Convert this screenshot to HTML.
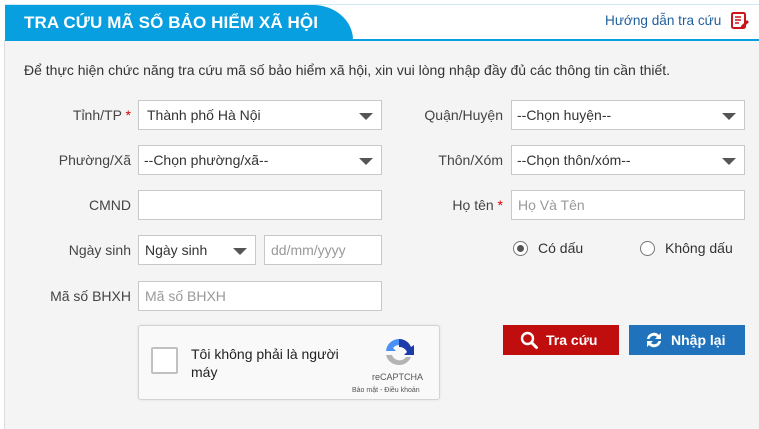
<!DOCTYPE html>
<html><head><meta charset="utf-8"><style>
*{box-sizing:border-box;margin:0;padding:0}
body{width:759px;height:429px;background:#fff;font-family:"Liberation Sans",Tahoma,sans-serif;font-size:14px;color:#333;position:relative;overflow:hidden}
.a{position:absolute}
.body{left:4px;top:40px;width:755px;height:389px;background:#f4f4f4;border-left:1px solid #ddd}
.tab{left:5px;top:5px;width:348px;height:35px;background:#089fe0;border-top-right-radius:40px 35px}
.tab span{position:absolute;left:19px;top:8px;color:#fff;font-weight:bold;font-size:17px;letter-spacing:.1px}
.lbl{text-align:right;font-size:14px;color:#444;height:30px;line-height:30px}
.lbl b{color:#d00;font-weight:normal}
.f{background:#fff;border:1px solid #c8c8c8;height:30px;line-height:28px;padding-left:8px;font-size:14px;color:#333}
.f.ph{color:#999}
.sel:after{content:"";position:absolute;right:8px;top:12px;border-left:7px solid transparent;border-right:7px solid transparent;border-top:7px solid #555}
.rad{width:15px;height:15px;border:1px solid #777;border-radius:50%;background:#fff}
.btn{height:30px;color:#fff;font-weight:bold;font-size:14px;line-height:30px}
</style></head><body>
<div class="a" style="left:5px;top:4px;width:754px;height:1px;background:#cfe9f7"></div>
<div class="a body"></div>
<div class="a tab"><span>TRA CỨU MÃ SỐ BẢO HIỂM XÃ HỘI</span></div>
<div class="a" style="left:5px;top:39px;width:754px;height:2px;background:#089fe0"></div>
<div class="a" style="left:605px;top:13px;color:#1f5f9e;font-size:13.6px">Hướng dẫn tra cứu</div>
<svg class="a" style="left:731px;top:12px" width="18" height="18" viewBox="0 0 18 18"><rect x="1" y="1" width="13" height="15" rx="1.5" fill="#fff" stroke="#c8161d" stroke-width="2"/><path d="M4 5h6M4 8h6M4 11h4" stroke="#c8161d" stroke-width="1.6"/><path d="M10 14l6-6 2 2-6 6h-2z" fill="#c8161d"/></svg>
<div class="a" style="left:24px;top:62px;font-size:14px;color:#333">Để thực hiện chức năng tra cứu mã số bảo hiểm xã hội, xin vui lòng nhập đầy đủ các thông tin cần thiết.</div>

<div class="a lbl" style="left:20px;top:100px;width:111px">Tỉnh/TP <b>*</b></div>
<div class="a f sel" style="left:138px;top:100px;width:244px">Thành phố Hà Nội</div>
<div class="a lbl" style="left:390px;top:100px;width:113px">Quận/Huyện</div>
<div class="a f sel" style="left:511px;top:100px;width:234px;padding-left:5px">--Chọn huyện--</div>

<div class="a lbl" style="left:20px;top:145px;width:111px">Phường/Xã</div>
<div class="a f sel" style="left:138px;top:145px;width:244px;padding-left:5px">--Chọn phường/xã--</div>
<div class="a lbl" style="left:390px;top:145px;width:113px">Thôn/Xóm</div>
<div class="a f sel" style="left:511px;top:145px;width:234px;padding-left:5px">--Chọn thôn/xóm--</div>

<div class="a lbl" style="left:20px;top:190px;width:111px">CMND</div>
<div class="a f" style="left:138px;top:190px;width:244px"></div>
<div class="a lbl" style="left:390px;top:190px;width:113px">Họ tên <b>*</b></div>
<div class="a f ph" style="left:511px;top:190px;width:234px;padding-left:6px">Họ Và Tên</div>

<div class="a lbl" style="left:20px;top:235px;width:111px">Ngày sinh</div>
<div class="a f sel" style="left:138px;top:235px;width:118px;padding-left:6px">Ngày sinh</div>
<div class="a f ph" style="left:264px;top:235px;width:118px;padding-left:6px">dd/mm/yyyy</div>
<div class="a rad" style="left:513px;top:241px"></div>
<div class="a" style="left:517px;top:245px;width:7px;height:7px;border-radius:50%;background:#555"></div>
<div class="a" style="left:538px;top:240px;color:#333">Có dấu</div>
<div class="a rad" style="left:640px;top:241px"></div>
<div class="a" style="left:665px;top:240px;color:#333">Không dấu</div>

<div class="a lbl" style="left:20px;top:281px;width:111px">Mã số BHXH</div>
<div class="a f ph" style="left:138px;top:281px;width:244px;padding-left:6px">Mã số BHXH</div>

<div class="a" style="left:138px;top:325px;width:302px;height:75px;background:#f9f9f9;border:1px solid #d3d3d3;border-radius:3px;box-shadow:0 0 3px rgba(0,0,0,.08)"></div>
<div class="a" style="left:151px;top:347px;width:27px;height:27px;background:#fff;border:2px solid #c1c1c1;border-radius:2px"></div>
<div class="a" style="left:191px;top:345px;font-size:14px;line-height:18px;color:#222;width:160px">Tôi không phải là người máy</div>
<svg class="a" style="left:382px;top:335px" width="34" height="34" viewBox="0 0 34 34"><path d="M17 4a13 13 0 0 1 12 8l3-2v10h-10l3-3a8 8 0 0 0-8-5z" fill="#1c3aa9"/><path d="M4 17A13 13 0 0 1 17 4v6a8 8 0 0 0-6 3l3 3H4z" fill="#4a90f5"/><path d="M17 30A13 13 0 0 1 4 20h6a8 8 0 0 0 14 2l5 0a13 13 0 0 1-12 8z" fill="#b3b3b3"/></svg>
<div class="a" style="left:372px;top:372px;font-size:9px;color:#555">reCAPTCHA</div>
<div class="a" style="left:352px;top:387px;font-size:7px;color:#555">Bảo mật - Điều khoản</div>

<div class="a btn" style="left:503px;top:325px;width:116px;background:#c00d0d"></div>
<svg class="a" style="left:520px;top:331px" width="19" height="19" viewBox="0 0 19 19"><circle cx="7.5" cy="7.5" r="5.5" fill="none" stroke="#fff" stroke-width="2.4"/><path d="M11.5 11.5l5 5" stroke="#fff" stroke-width="3" stroke-linecap="round"/></svg>
<div class="a btn" style="left:546px;top:325px">Tra cứu</div>
<div class="a btn" style="left:629px;top:325px;width:116px;background:#1f72bb"></div>
<svg class="a" style="left:644px;top:330px" width="20" height="20" viewBox="0 0 20 20"><path d="M3 9a7 7 0 0 1 12-4l2-2v6h-6l2-2a4.5 4.5 0 0 0-7.5 2z" fill="#fff"/><path d="M17 11a7 7 0 0 1-12 4l-2 2v-6h6l-2 2a4.5 4.5 0 0 0 7.5-2z" fill="#fff"/></svg>
<div class="a btn" style="left:671px;top:325px">Nhập lại</div>
</body></html>
